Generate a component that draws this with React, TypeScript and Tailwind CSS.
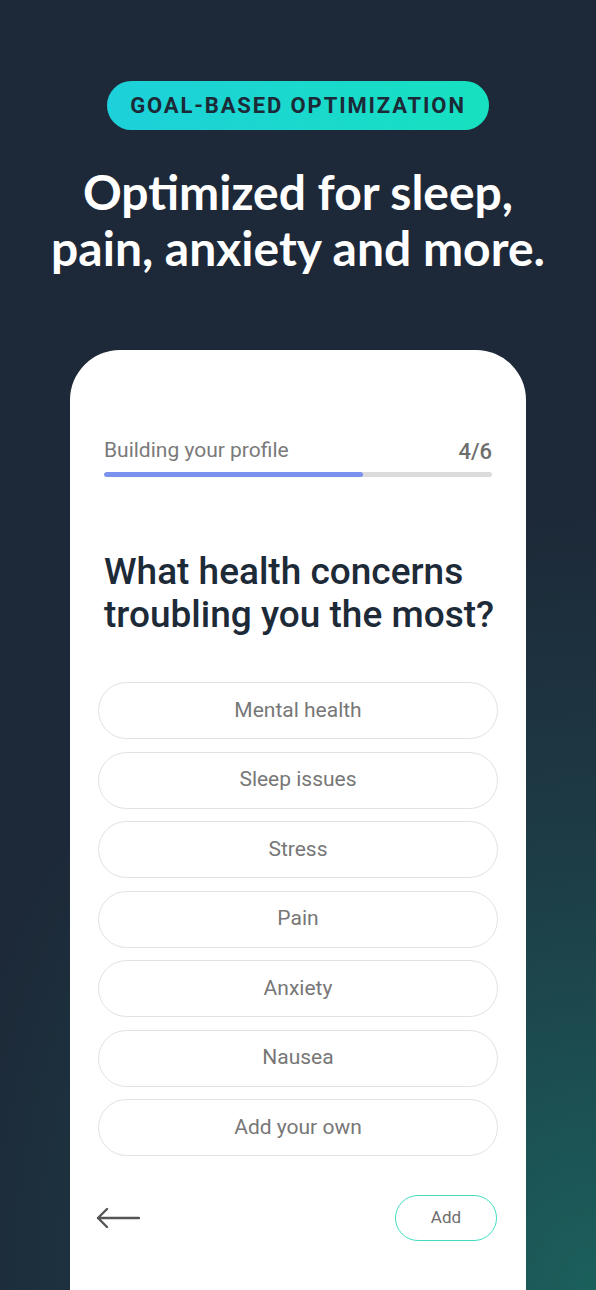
const concerns = ["Mental health", "Sleep issues", "Stress", "Pain", "Anxiety", "Nausea", "Add your own"];

const step = 4;
const totalSteps = 6;

function BackArrow() {
  return (
    <svg width="44" height="22" viewBox="0 0 44 22" fill="none" className="ml-[-2px]">
      <path d="M2 11H43M11 2L2 11L11 20" stroke="#555555" strokeWidth="2.4" strokeLinecap="round" strokeLinejoin="round" />
    </svg>
  );
}

export default function App() {
  const progress = (step / totalSteps) * 100;

  return (
    <div
      className="flex h-[1290px] w-full flex-col items-center overflow-hidden bg-[#1d2938] bg-[radial-gradient(ellipse_110%_60%_at_100%_100%,#1b605c_0%,#1d3d46_55%,#1d2938_100%)]"
      style={{ fontFamily: "Roboto, 'Liberation Sans', sans-serif" }}
    >
      <div className="mt-[81px] flex h-[49px] w-[382px] items-center justify-center rounded-full bg-[linear-gradient(90deg,#1dd0da,#17e1c0)]">
        <span className="text-[22px] font-bold tracking-[0.085em] text-[#1c2a38]">GOAL-BASED OPTIMIZATION</span>
      </div>

      <h1
        className="mt-[34px] text-center text-[48px] leading-[56px] font-bold whitespace-nowrap text-white"
        style={{ fontFamily: "Lato, 'Noto Sans', sans-serif" }}
      >
        Optimized for sleep,
        <br />
        pain, anxiety and more.
      </h1>

      <div className="mt-[74px] flex w-[456px] flex-1 flex-col rounded-t-[50px] bg-white px-[28px] pt-[88px]">
        <div className="px-[6px]">
          <div className="flex h-[26px] items-center justify-between">
            <span className="text-[21px] text-[#7a7a7a]">Building your profile</span>
            <span className="text-[22px] font-medium text-[#6e6e6e]">
              {step}/{totalSteps}
            </span>
          </div>
          <div className="mt-[8px] h-[5px] w-full overflow-hidden rounded-full bg-[#dcdcdc]">
            <div className="h-full rounded-full bg-[#7b93ee]" style={{ width: `${progress}%` }} />
          </div>

          <h2 className="mt-[73px] text-[37px] leading-[43px] font-medium whitespace-nowrap text-[#1d2a38]">
            What health concerns
            <br />
            troubling you the most?
          </h2>
        </div>

        <ul className="mt-[46px] flex flex-col gap-[12.5px]">
          {concerns.map((label) => (
            <li
              key={label}
              className="flex h-[57px] items-center justify-center rounded-full border-[1.5px] border-[#e2e2e2] text-[21px] text-[#777777]"
            >
              {label}
            </li>
          ))}
        </ul>

        <div className="mt-[39px] flex items-center justify-between">
          <BackArrow />
          <button className="mr-[1px] h-[46px] w-[102px] rounded-full border-[1.5px] border-[#3fdcc2] text-[17px] text-[#6e6e6e]">
            Add
          </button>
        </div>
      </div>
    </div>
  );
}
